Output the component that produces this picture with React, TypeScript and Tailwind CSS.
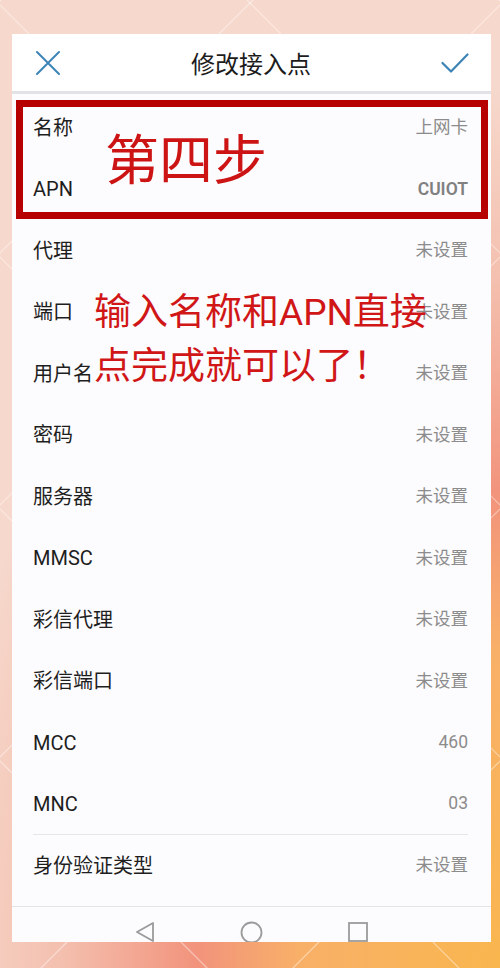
import React from 'react';

const rows: { label: string; value: string; bold?: boolean; divider?: boolean }[] = [
  { label: '名称', value: '上网卡' },
  { label: 'APN', value: 'CUIOT', bold: true },
  { label: '代理', value: '未设置' },
  { label: '端口', value: '未设置' },
  { label: '用户名', value: '未设置' },
  { label: '密码', value: '未设置' },
  { label: '服务器', value: '未设置' },
  { label: 'MMSC', value: '未设置' },
  { label: '彩信代理', value: '未设置' },
  { label: '彩信端口', value: '未设置' },
  { label: 'MCC', value: '460' },
  { label: 'MNC', value: '03', divider: true },
  { label: '身份验证类型', value: '未设置' },
];

// faint diamond lines of the wallpaper
const Wallpaper: React.FC = () => {
  const lines: React.ReactNode[] = [];
  for (let k = -4; k < 8; k++) {
    const c = k * 252;
    lines.push(<line key={'a' + k} x1={c + 1} y1={0} x2={c + 1 - 1200} y2={1200} />);
    lines.push(<line key={'b' + k} x1={c - 5} y1={0} x2={c - 5 + 1200} y2={1200} />);
  }
  return (
    <svg className="absolute inset-0" width="500" height="968" viewBox="0 0 500 968">
      <g stroke="#ffffff" strokeOpacity="0.45" strokeWidth="1.2">{lines}</g>
    </svg>
  );
};

const App: React.FC = () => {
  return (
    <div
      className="relative w-[500px] h-[968px] overflow-hidden bg-[#f6d8cc] bg-[radial-gradient(ellipse_560px_880px_at_100%_100%,#f9b64e_0%,#f8b068_36%,#f2937c_54%,#f4bfae_78%,#f6d8cc_100%)] pt-[34px] pl-[12px]"
      style={{ fontFamily: 'Roboto, "Noto Sans CJK SC", "Noto Sans", sans-serif' }}
    >
      <Wallpaper />

      <div className="relative w-[479px] h-[908px] bg-[#fcfbfd] flex flex-col overflow-hidden">
        {/* title bar */}
        <div className="h-[60px] shrink-0 bg-white flex items-center justify-between pl-[23px] pr-[22px] border-b-[3px] border-[#e3e2e6]">
          <svg width="26" height="26" viewBox="0 0 26 26" fill="none" stroke="#3d84b6" strokeWidth="2" strokeLinecap="round">
            <path d="M2 2 L24 24 M24 2 L2 24" />
          </svg>
          <span className="text-[24px] text-[#1c1c1c] leading-none pt-[5px]">修改接入点</span>
          <svg width="28" height="20" viewBox="0 0 28 20" fill="none" stroke="#3d84b6" strokeWidth="2.2" strokeLinecap="round" strokeLinejoin="round">
            <path d="M1.5 10 L10 18.5 L26.5 1.5" />
          </svg>
        </div>

        {/* settings list */}
        <div className="flex flex-col pl-[21px] pr-[23px] pt-[3px]">
          {rows.map((r) => (
            <div
              key={r.label}
              className={
                'h-[61.5px] shrink-0 flex items-center justify-between ' +
                (r.divider ? 'border-b border-[#e6e5e9]' : '')
              }
            >
              <span className="text-[20px] text-[#1e1e1e] leading-none">{r.label}</span>
              <span
                className={
                  'text-[17.5px] leading-none ' +
                  (r.bold ? 'font-semibold text-[#808080]' : 'text-[#8c8c8c]')
                }
              >
                {r.value}
              </span>
            </div>
          ))}
        </div>

        {/* navigation bar */}
        <div className="mt-auto h-[37px] shrink-0 border-t border-[#e4e4e6] flex items-end justify-center gap-[84px] translate-y-[1px]">
          <svg width="22" height="22" viewBox="0 0 22 22" fill="none" stroke="#9b9b9b" strokeWidth="1.8" strokeLinejoin="round">
            <path d="M19 2 L3 11 L19 20 Z" />
          </svg>
          <svg width="23" height="22" viewBox="0 0 23 22" fill="none" stroke="#9b9b9b" strokeWidth="1.8">
            <circle cx="11.5" cy="11.5" r="10" />
          </svg>
          <svg width="22" height="22" viewBox="0 0 22 22" fill="none" stroke="#9b9b9b" strokeWidth="1.8">
            <rect x="2" y="2" width="18" height="18" />
          </svg>
        </div>
      </div>

      {/* red annotation frame */}
      <div className="absolute left-[16px] top-[100px] w-[472px] h-[119px] border-[7px] border-[#b70000]" />

      {/* annotation texts */}
      <div className="absolute left-[105px] top-[135px] text-[54px] leading-none text-[#cd1414]">第四步</div>
      <div className="absolute left-[94px] top-[286px] text-[37px] leading-[54px] text-[#d01616]">
        <div>输入名称和APN直接</div>
        <div>点完成就可以了！</div>
      </div>
    </div>
  );
};

export default App;
